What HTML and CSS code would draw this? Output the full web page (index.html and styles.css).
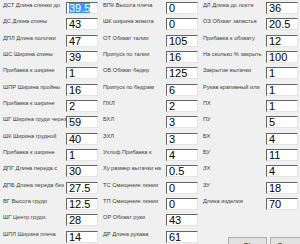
FILE: index.html
```html
<!DOCTYPE html>
<html lang="ru">
<head>
<meta charset="utf-8">
<title>Параметры</title>
<link rel="stylesheet" href="styles.css">
</head>
<body>
<div class="dialog">
  <div class="col">
    <div class="row"><span class="label">ДСТ Длина спинки до</span><div class="field"><span class="sel">39.5</span></div></div>
    <div class="row"><span class="label">ДС Длина спины</span><div class="field">43</div></div>
    <div class="row"><span class="label">ДПЛ Длина полочки</span><div class="field">47</div></div>
    <div class="row"><span class="label">ШС Ширина спины</span><div class="field">39</div></div>
    <div class="row"><span class="label">Прибавка к ширине</span><div class="field">1</div></div>
    <div class="row"><span class="label">ШПР Ширина пройны</span><div class="field">16</div></div>
    <div class="row"><span class="label">Прибавка к ширине</span><div class="field">2</div></div>
    <div class="row"><span class="label">ШГ Ширина груди через</span><div class="field">59</div></div>
    <div class="row"><span class="label">ШК Ширина грудной</span><div class="field">40</div></div>
    <div class="row"><span class="label">Прибавка к ширине</span><div class="field">1</div></div>
    <div class="row"><span class="label">ДПГ Длина переда с</span><div class="field">30</div></div>
    <div class="row"><span class="label">ДПБ Длина переда без</span><div class="field">27.5</div></div>
    <div class="row"><span class="label">ВГ Высота груди</span><div class="field">12.5</div></div>
    <div class="row"><span class="label">ШГ Центр груди,</span><div class="field">28</div></div>
    <div class="row"><span class="label">ШПЛ Ширина плеча</span><div class="field">14</div></div>
  </div>
  <div class="col">
    <div class="row"><span class="label">ВПК Высота плеча</span><div class="field">0</div></div>
    <div class="row"><span class="label">ШК ширина живота</span><div class="field">0</div></div>
    <div class="row"><span class="label">ОТ Обхват талии</span><div class="field">105</div></div>
    <div class="row"><span class="label">Припуск по талии</span><div class="field">16</div></div>
    <div class="row"><span class="label">ОБ Обхват бедер</span><div class="field">125</div></div>
    <div class="row"><span class="label">Припуск по бедрам</span><div class="field">6</div></div>
    <div class="row"><span class="label">ПХЛ</span><div class="field">2</div></div>
    <div class="row"><span class="label">БХЛ</span><div class="field">3</div></div>
    <div class="row"><span class="label">ЗХЛ</span><div class="field">3</div></div>
    <div class="row"><span class="label">Ухлоф Прибавка к</span><div class="field">4</div></div>
    <div class="row"><span class="label">Ху размер вытачки на</span><div class="field">0.5</div></div>
    <div class="row"><span class="label">ТС Смещение линии</span><div class="field">0</div></div>
    <div class="row"><span class="label">ТП Смещение линии</span><div class="field">0</div></div>
    <div class="row"><span class="label">ОР Обхват руки</span><div class="field">43</div></div>
    <div class="row"><span class="label">ДР Длина рукава</span><div class="field">61</div></div>
  </div>
  <div class="col">
    <div class="row"><span class="label">ДЛ Длина до локтя</span><div class="field">36</div></div>
    <div class="row"><span class="label">ОЗ Обхват запастья</span><div class="field">20.5</div></div>
    <div class="row"><span class="label">Прибавка к обхвату</span><div class="field">12</div></div>
    <div class="row"><span class="label">На сколько % закрыть</span><div class="field">100</div></div>
    <div class="row"><span class="label">Закрытие вытачки</span><div class="field">1</div></div>
    <div class="row"><span class="label">Рукав крапивный или</span><div class="field">1</div></div>
    <div class="row"><span class="label">ПХ</span><div class="field">1</div></div>
    <div class="row"><span class="label">ПУ</span><div class="field">5</div></div>
    <div class="row"><span class="label">БХ</span><div class="field">4</div></div>
    <div class="row"><span class="label">БУ</span><div class="field">11</div></div>
    <div class="row"><span class="label">ЗХ</span><div class="field">4</div></div>
    <div class="row"><span class="label">ЗУ</span><div class="field">18</div></div>
    <div class="row"><span class="label">Длина изделия</span><div class="field">70</div></div>
    <div class="buttons">
      <button class="btn" type="button">Ok</button>
      <button class="btn" type="button">Отмена</button>
    </div>
  </div>
</div>
</body>
</html>
```
FILE: styles.css
```css
html, body {
  margin: 0;
  padding: 0;
}
body {
  width: 300px;
  height: 244px;
  overflow: hidden;
  background: #f0f0f0;
  font-family: "Liberation Sans", Arial, sans-serif;
  color: #000;
}
.dialog {
  display: grid;
  grid-template-columns: 100px 100px 100px;
  padding-top: 2px;
}
.col {
  display: flex;
  flex-direction: column;
  padding-left: 3px;
}
.row {
  display: flex;
  flex-shrink: 0;
  height: 16.35px;
}
.label {
  width: 63px;
  flex-shrink: 0;
  font-size: 5.7px;
  line-height: 7px;
  color: #3c3c3c;
  white-space: nowrap;
}
.field {
  box-sizing: border-box;
  width: 32px;
  height: 12px;
  background: #fff;
  border-top: 1px solid #646464;
  border-left: 1px solid #646464;
  border-right: 1px solid #e3e3e3;
  border-bottom: 1px solid #e3e3e3;
  padding-left: 2px;
  font-size: 11px;
  line-height: 10px;
  white-space: nowrap;
  overflow: hidden;
}
.sel {
  display: inline-block;
  background: #3399ff;
  color: #fff;
  line-height: 10px;
}
.buttons {
  display: flex;
  gap: 3px;
  margin-top: 23px;
  padding-left: 25px;
}
.btn {
  flex-shrink: 0;
  box-sizing: border-box;
  width: 39px;
  height: 16px;
  margin: 0;
  padding: 2px 0 0;
  border: 1px solid #adadad;
  background: #e1e1e1;
  font-family: "Liberation Sans", Arial, sans-serif;
  font-size: 7px;
  line-height: 8px;
  color: #000;
  text-align: center;
}
```
